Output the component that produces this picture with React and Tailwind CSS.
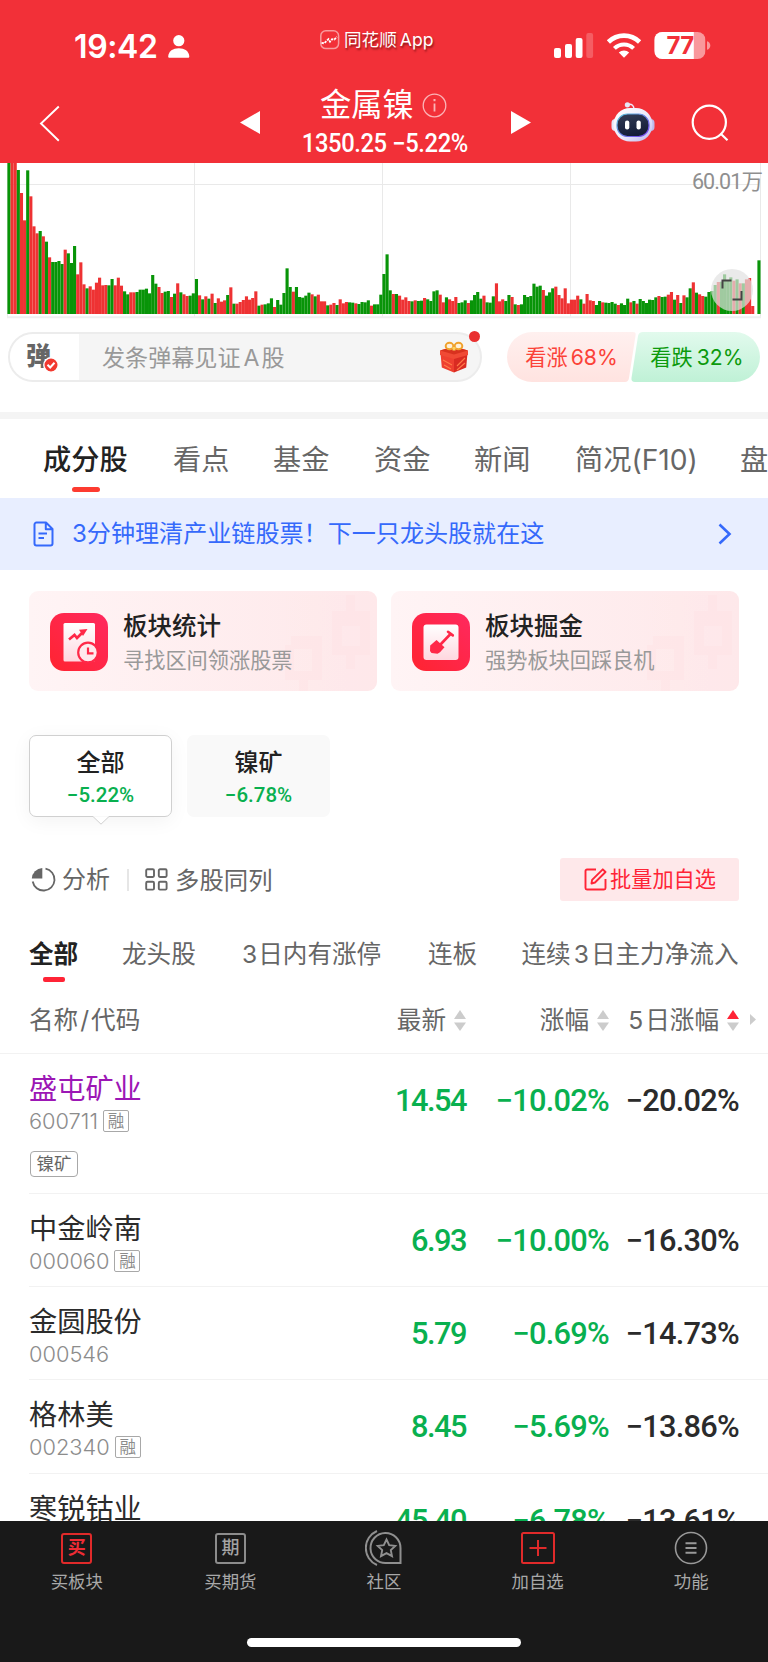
import React from "react";

const SANS = "font-['Inter','Noto_Sans_CJK_SC',sans-serif]";
const NUM = "font-['Roboto','Noto_Sans_CJK_SC',sans-serif]";

/* Minute volume bars: colour letter followed by the top edge on a 462-unit scale. */
const VOLUME =
  "G0 R0 R0 G30 R99 R181 G31 R109 R199 R220 G213 R229 G245 R292 G306 G306 G303 G312 R269 G280 G309 G258 R343 R307 R373 G385 R379 R389 R368 R353 R376 R375 G376 G357 R376 R353 R377 G394 G403 R397 R397 G396 G389 G389 G386 G400 G345 G371 R381 R399 G395 G393 R411 G401 R370 G397 R403 R408 G407 G400 G357 R406 G418 R409 G416 R401 G429 R415 R425 R421 G405 R382 G431 R431 R426 R420 R409 R419 R414 R394 " +
  "G437 R434 G433 G430 G415 R441 G420 G434 G399 G325 G381 R395 G381 G411 G413 G407 G398 R403 G409 R404 R424 R424 G436 R434 R429 G435 R418 R430 R426 G427 G428 R430 G432 G426 G427 G421 R437 G433 G433 G404 G342 G283 G391 R402 G402 R407 R419 R412 R423 G424 R421 G423 G422 R414 G418 G423 G394 G391 R404 R427 G412 R418 R423 R411 G429 G427 G421 R429 G421 G405 G396 G416 R407 G427 G428 G409 R370 R424 R418 G423 G405 R411 " +
  "G433 R435 G433 G405 G411 G408 G371 G380 G377 R390 G407 G397 G385 R380 R405 R415 R385 R430 R419 R419 R407 G418 R431 R402 R421 R423 G435 G423 R427 G428 G429 G426 G431 R435 G430 G435 G416 R427 G423 R431 G417 G423 G429 G419 G420 G412 R408 G411 G410 R404 R396 G419 R405 G429 R406 G412 G385 R367 G398 R403 R408 G410 G396 G393 G375 R366 G365 G343 G360 G352 R362 G358 R370 G370 R358 R354 R438 R462 G301";

const bars = VOLUME.split(" ").map((b, i) => ({
  x: 7.4 + i * 3.125,
  color: b[0] === "G" ? "#089408" : "#ee3233",
  top: Math.max(-1, Number(b.slice(1)) / 3 - 4),
}));

function VolumeChart() {
  return (
    <svg width="768" height="158" viewBox="0 -1 768 158" className="block">
      <g stroke="#e9e9e9" strokeWidth="1">
        <path d="M7 20.5H759M194.5 -1V154M382.5 -1V154M570.5 -1V154M760.5 -1V154M7.5 -1V154" />
        <path d="M7 153.2H761" strokeWidth="2" stroke="#efeff0" />
      </g>
      {bars.map((b, i) => (
        <rect key={i} x={b.x} y={b.top} width="3.125" height={150 - b.top} fill={b.color} />
      ))}
    </svg>
  );
}

function StatusBar() {
  return (
    <div className="flex h-[84px] items-start pl-[74px] text-white">
      <div className="mt-[27px] w-[86px] whitespace-nowrap text-[32px] font-semibold leading-[40px] tracking-[-0.4px]">19:42</div>
      <svg className="ml-[7px] mt-[34px]" width="23" height="25" viewBox="0 0 23 25" fill="#fff">
        <circle cx="11.8" cy="6.7" r="5.6" />
        <path d="M1.2 22.5C1.5 17 6 14.2 11.8 14.2S22 17 22.3 22.5c0 1-.5 1.3-1.2 1.3H2.4c-.7 0-1.2-.3-1.2-1.3z" />
      </svg>
      <div className="ml-[130px] mt-[29px] flex h-[22px] items-center">
        <svg width="20" height="20" viewBox="0 0 20 20" fill="none">
          <rect x="0.8" y="0.8" width="17.8" height="17.8" rx="5" stroke="#f89a9d" strokeWidth="1.5" />
          <path d="M1.5 12.8l2.6.5 2-2 2.4-2.2 1.5 2.5 2-2.3 2.3.3 2.6-2.8" stroke="#fff" strokeWidth="1.8" strokeDasharray="2.4 1" />
        </svg>
        <span className="ml-[4px] whitespace-nowrap text-[17.6px] leading-[22px] [text-shadow:1px_2px_2px_rgba(60,0,0,0.55)]">同花顺<span className="ml-[3px]">App</span></span>
      </div>
      <svg className="absolute left-[550.5px] top-[28px]" width="165" height="36" viewBox="0 0 165 36" fill="#fff">
        <rect x="3" y="20" width="7" height="10" rx="2" />
        <rect x="14" y="16" width="7" height="14" rx="2" />
        <rect x="24.7" y="10" width="6.8" height="20" rx="2" />
        <rect x="35.3" y="5" width="6.8" height="25" rx="2" opacity="0.22" />
        <path d="M73 29.7l5.2-5.2a7.6 7.6 0 0 0-10.4 0z" />
        <path d="M63.4 20.4a13.6 13.6 0 0 1 19.2 0" fill="none" stroke="#fff" strokeWidth="4" />
        <path d="M57.4 14a22.4 22.4 0 0 1 31.2 0" fill="none" stroke="#fff" strokeWidth="4.6" />
        <clipPath id="batt"><rect x="103.3" y="4" width="51.2" height="27" rx="8" /></clipPath>
        <g clipPath="url(#batt)">
          <rect x="103.3" y="4" width="51.2" height="27" fill="#f9989c" />
          <rect x="103.3" y="4" width="39.5" height="27" />
        </g>
        <path d="M156 13.3c2 .5 3.3 2 3.3 4.2s-1.3 3.7-3.3 4.2z" fill="#f9989c" />
        <text x="129" y="26" textAnchor="middle" fontFamily="Inter" fontWeight="700" fontSize="24" letterSpacing="-0.8" fill="#f23038">77</text>
      </svg>
    </div>
  );
}

function Robot() {
  return (
    <svg width="44" height="42" viewBox="0 0 44 42">
      <defs>
        <linearGradient id="rh" x1="0" y1="0" x2="1" y2="1">
          <stop offset="0" stopColor="#fff" />
          <stop offset="0.55" stopColor="#eceafb" />
          <stop offset="1" stopColor="#b9b4ee" />
        </linearGradient>
        <linearGradient id="rf" x1="0" y1="0" x2="0.3" y2="1">
          <stop offset="0" stopColor="#333d56" />
          <stop offset="1" stopColor="#151d38" />
        </linearGradient>
        <linearGradient id="rs" x1="0" y1="0" x2="1" y2="1">
          <stop offset="0" stopColor="#58c3d8" />
          <stop offset="1" stopColor="#7a3ff0" />
        </linearGradient>
      </defs>
      <path d="M17 2.5q6-1 6 5" fill="none" stroke="#eeeafc" strokeWidth="1.5" />
      <circle cx="16.4" cy="2.8" r="2.6" fill="#e6e6f6" />
      <rect x="0.5" y="17" width="8" height="12" rx="4" fill="#e4e4f6" />
      <rect x="35.5" y="17" width="8" height="12" rx="4" fill="#bdb9ea" />
      <rect x="2.5" y="6" width="39" height="33.5" rx="16.5" fill="url(#rh)" />
      <rect x="6" y="12" width="32" height="22.5" rx="10.5" fill="url(#rf)" stroke="url(#rs)" strokeWidth="1.2" />
      <rect x="14" y="18.5" width="4.3" height="9" rx="2.1" fill="#fff" />
      <rect x="25.5" y="18.5" width="4.3" height="9" rx="2.1" fill="#fff" />
    </svg>
  );
}

function TitleBar() {
  return (
    <div className="flex h-[80px] items-start text-white">
      <svg className="ml-[38px] mt-[20px]" width="24" height="40" viewBox="0 0 24 40" fill="none" stroke="#fff" strokeWidth="1.9">
        <path d="M20.8 2.5L3 19.5 20.8 36.8" />
      </svg>
      <svg className="ml-[178px] mt-[27px]" width="20" height="23" fill="#fff"><path d="M0 11.5L20 0v23z" /></svg>
      <div className="w-[251px]">
        <div className="flex h-[42px] items-center pl-[60px]">
          <span className="text-[31.3px] leading-[42px]">金属镍</span>
          <svg className="ml-[8px]" width="25" height="25" viewBox="0 0 25 25" fill="none" stroke="#fbb4b7" strokeWidth="1.3">
            <circle cx="12.5" cy="12.5" r="11.3" />
            <path d="M12.5 10.5v8" strokeWidth="1.8" />
            <path d="M12.5 6v2.200" strokeWidth="2" />
          </svg>
        </div>
        <div className={`${NUM} mt-[2px] origin-left scale-x-[0.95] whitespace-nowrap pl-[44px] text-[25px] font-medium leading-[32px] tracking-[-0.4px]`}>1350.25 −5.22%</div>
      </div>
      <svg className="mt-[27px]" width="20" height="23" fill="#fff"><path d="M20 11.5L0 0v23z" /></svg>
      <div className="ml-[80px] mt-[18px]"><Robot /></div>
      <svg className="ml-[36px] mt-[20px]" width="38" height="38" viewBox="0 0 38 38" fill="none" stroke="#fff" strokeWidth="2.2">
        <circle cx="18.3" cy="18.3" r="16.6" />
        <path d="M29.5 29.5l7 6.8" />
      </svg>
    </div>
  );
}

function Gift() {
  return (
    <svg width="30" height="32" viewBox="0 0 30 32">
      <path d="M1.5 12l13.5 4v15.5L2.8 26.5z" fill="#ee4030" />
      <path d="M28.5 12L15 16v15.5l12.2-5z" fill="#d92b22" />
      <path d="M1 9.500L15 5.5l14 4v4.500l-14 4-14-4z" fill="#f04a35" />
      <path d="M1 9.500L15 5.5l14 4-14 4z" fill="#d8321f" />
      <path d="M4 19l9 5M5 24l7 4M18 25l8-8M18 29l8-7" stroke="#ff7a48" strokeWidth="1.1" />
      <ellipse cx="10.5" cy="5" rx="3.800" ry="3.200" fill="#fff0d8" stroke="#f0a22c" strokeWidth="2" />
      <ellipse cx="19.5" cy="5" rx="3.800" ry="3.200" fill="#fff0d8" stroke="#f0a22c" strokeWidth="2" />
      <path d="M13.5 6h3v3.500h-3z" fill="#fbd05c" />
    </svg>
  );
}

function DanmakuRow() {
  return (
    <div className="mt-[10px] flex h-[50px] px-[8px]">
      <div className="relative flex h-[50px] w-[475px] items-center overflow-visible rounded-full border-2 border-[#ececec] bg-[#f5f5f5]">
        <div className="relative flex h-full w-[69px] items-center rounded-l-full bg-white pl-[16px]">
          <span className="pb-[3px] text-[25px] font-black leading-[30px] text-[#666]">弹</span>
          <svg className="absolute left-[33px] top-[23px]" width="16" height="16" viewBox="0 0 16 16" fill="none">
            <circle cx="8" cy="8" r="7.2" fill="#f2392f" stroke="#fff" strokeWidth="1.4" />
            <path d="M4.5 7.800L7.200 10.500l4.300-4.700" stroke="#fff" strokeWidth="2" />
          </svg>
        </div>
        <span className="ml-[23px] flex-1 whitespace-nowrap pt-[1px] text-[23.1px] leading-[34px] text-[#999]">发条弹幕见证<span className="ml-[3px] mr-[2px]">A</span>股</span>
        <div className="mr-[11px]"><Gift /></div>
        <span className="absolute -top-[3px] right-0 h-[11px] w-[11px] rounded-full bg-[#e93030]" />
      </div>
      <div className="relative ml-[25px] h-[50px] w-[253px]">
        <svg className="absolute inset-0" width="253" height="50" viewBox="0 0 253 50">
          <defs>
            <linearGradient id="up" x1="0" y1="0" x2="0" y2="1"><stop offset="0" stopColor="#fff0ef" /><stop offset="1" stopColor="#ffe3e0" /></linearGradient>
            <linearGradient id="dn" x1="0" y1="0" x2="0" y2="1"><stop offset="0" stopColor="#e2faed" /><stop offset="1" stopColor="#bff1d6" /></linearGradient>
          </defs>
          <path d="M25 0H126q3 0 2.600 3L122 46q-.6 4-4 4H25a25 25 0 0 1 0-50z" fill="url(#up)" />
          <path d="M136 0h92a25 25 0 0 1 0 50H128q-4 0-3.500-4L131 4q.8-4 5-4z" fill="url(#dn)" />
        </svg>
        <div className="relative flex h-[50px] items-center whitespace-nowrap pt-[1px] text-[21.200px]">
          <span className="ml-[18px] w-[92px] text-[#fb4238]">看涨<span className="ml-[3px]">68%</span></span>
          <span className="ml-[33px] w-[92px] text-[#0c9a0c]">看跌<span className="ml-[4px]">32%</span></span>
        </div>
      </div>
    </div>
  );
}

function Tabs() {
  const tabs = [["看点", "w-[100px]"], ["基金", "w-[101px]"], ["资金", "w-[100px]"], ["新闻", "w-[101px]"], ["简况(F10)", "w-[165px]"], ["盘", "w-[28px]"]];
  return (
    <div className="h-[79px] pl-[43px]">
      <div className="flex whitespace-nowrap pt-[21px] text-[28.2px] leading-[40px] text-[#666]">
        <div className="w-[130px] shrink-0 font-medium text-[#222]">
          成分股
          <div className="ml-[29px] mt-[7px] h-[5px] w-[28px] rounded-full bg-[#fd3b30]" />
        </div>
        {tabs.map(([t, w]) => <div key={t} className={`${w} shrink-0`}>{t}</div>)}
      </div>
    </div>
  );
}

function Banner() {
  return (
    <div className="flex h-[72px] shrink-0 items-center bg-[#e8eeff] text-[#3569fb]">
      <svg className="ml-[33px]" width="21" height="26" viewBox="0 0 21 26" fill="none" stroke="#3569fb" strokeWidth="2" strokeLinejoin="round">
        <path d="M13 1.5H3.5a2 2 0 0 0-2 2v19a2 2 0 0 0 2 2h14a2 2 0 0 0 2-2V8zM12.800 1.500V8.300h6.700M5.500 12.500h8.500M5.500 17h5.500" />
      </svg>
      <span className="ml-[18px] whitespace-nowrap pt-[1px] text-[24.08px]">3分钟理清产业链股票！下一只龙头股就在这</span>
      <svg className="ml-auto mr-[36px]" width="14" height="22" viewBox="0 0 14 22" fill="none" stroke="#3569fb" strokeWidth="2.600"><path d="M1.500 1.500L11.500 11 1.500 20.500" /></svg>
    </div>
  );
}

function CardIcon({ kind }) {
  return (
    <svg width="58" height="58" viewBox="0 0 58 58">
      <defs>
        <linearGradient id="ci" x1="1" y1="0" x2="0" y2="1"><stop offset="0" stopColor="#ff295f" /><stop offset="1" stopColor="#ff2430" /></linearGradient>
        <linearGradient id="cp" x1="0" y1="0" x2="0" y2="1"><stop offset="0" stopColor="#fff" /><stop offset="1" stopColor="#ffd7df" /></linearGradient>
      </defs>
      <rect width="58" height="58" rx="14" fill="url(#ci)" />
      {kind === "stats" ? (
        <g>
          <rect x="13.5" y="10" width="31.5" height="38.5" rx="1.5" fill="url(#cp)" />
          <path d="M19 26.500l5.500-4.500 2.500 3 6-6" fill="none" stroke="#ff2848" strokeWidth="2.700" />
          <path d="M29 16.800l8.500-.8-4.500 7z" fill="#ff2848" />
          <circle cx="38" cy="39.500" r="9.800" fill="#ffe9ed" stroke="#ff2848" strokeWidth="2.200" />
          <path d="M38 34.500v5.800h5.500" fill="none" stroke="#ff2848" strokeWidth="2.200" />
        </g>
      ) : (
        <g>
          <rect x="11.5" y="11.500" width="35" height="35.500" rx="3" fill="url(#cp)" />
          <path d="M28 32L38.500 21M36 18.800l4.800 3.600" fill="none" stroke="#ff2848" strokeWidth="2.600" strokeLinecap="round" />
          <path d="M24.500 27l8 7.300-4.500 5-2.500 1.500-6-.8-1.500-2 .2-5.500z" fill="#ff2848" />
        </g>
      )}
    </svg>
  );
}

function PromoCard({ kind, title, sub }) {
  return (
    <div className="relative flex h-[100px] w-[348px] overflow-hidden rounded-[9px] bg-linear-to-r from-[#fff4f5] to-[#fee8ea] pl-[21px] pt-[21.500px]">
      <svg className="absolute bottom-0 right-0" width="100" height="100" viewBox="0 0 100 100" fill="#ffdfe3" opacity="0.350">
        <path fillRule="evenodd" d="M69 4h9v16h15v44H78v14h-9V64H55V20h14zM65 35v20h18V35z" />
        <path fillRule="evenodd" d="M14 45h31v44H31v11h-9V89H8V54h6zM17 58v22h18V58z" />
      </svg>
      <CardIcon kind={kind} />
      <div className="relative ml-[15px] whitespace-nowrap">
        <div className="-mt-[4px] text-[24.500px] font-medium leading-[34px] text-[#222]">{title}</div>
        <div className="text-[21.200px] leading-[34px] text-[#999]">{sub}</div>
      </div>
    </div>
  );
}

function Chips() {
  return (
    <div className="mt-[44px] flex gap-[15px] pl-[29px] text-center">
      <div className="relative h-[82px] w-[143px] rounded-[7px] border border-[#d0d0d0] bg-white pt-[10px] shadow-[0_4px_20px_rgba(0,0,0,0.050)]">
        <div className="text-[24px] font-medium leading-[34px] text-[#222]">全部</div>
        <div className={`${NUM} text-[20.500px] font-medium leading-[31px] text-[#09b04f]`}>−5.22%</div>
        <svg className="absolute left-[62px] top-[80px]" width="18" height="9" viewBox="0 0 18 9" fill="#fff" stroke="#d0d0d0"><path d="M1 .5L9 8.200 17 .5" /><path d="M1.500 0H16.500" stroke="#fff" strokeWidth="1.500" /></svg>
      </div>
      <div className="h-[82px] w-[143px] rounded-[7px] bg-[#f9f9f9] pt-[11px]">
        <div className="text-[24px] font-medium leading-[34px] text-[#222]">镍矿</div>
        <div className={`${NUM} text-[20.500px] font-medium leading-[31px] text-[#09b04f]`}>−6.78%</div>
      </div>
    </div>
  );
}

function Toolbar() {
  return (
    <div className="mt-[41px] flex h-[43px] items-center whitespace-nowrap pl-[31px] pr-[29px] text-[24px] text-[#666]">
      <svg width="25" height="25" viewBox="0 0 25 25" fill="none" stroke="#666" strokeWidth="1.800">
        <path d="M14.500 1.700A11 11 0 1 1 1.700 14.500" />
        <path d="M11.300 1v10.500H.8A11 11 0 0 1 11.300 1z" fill="#666" stroke="none" />
      </svg>
      <span className="ml-[6px] pt-[1px]">分析</span>
      <span className="ml-[17px] h-[22px] w-[1.500px] bg-[#e6e6e6]" />
      <svg className="ml-[16.500px]" width="23" height="23" viewBox="0 0 23 23" fill="none" stroke="#666" strokeWidth="1.900">
        <rect x="1.200" y="1.200" width="7.800" height="7.800" rx="1.200" /><rect x="13.800" y="1.200" width="7.800" height="7.800" rx="1.200" />
        <rect x="1.200" y="13.800" width="7.800" height="7.800" rx="1.200" /><rect x="13.800" y="13.800" width="7.800" height="7.800" rx="1.200" />
      </svg>
      <span className="ml-[7px] pt-[1px] text-[24.400px]">多股同列</span>
      <div className="ml-auto flex h-[43px] w-[179px] items-center rounded-[3px] bg-[#fee8ea] pl-[24px] text-[21.200px] text-[#ff2436]">
        <svg width="23" height="23" viewBox="0 0 23 23" fill="none" stroke="#ff2436" strokeWidth="1.900" strokeLinejoin="round">
          <path d="M12 1.500H3a1.500 1.500 0 0 0-1.500 1.500V20A1.500 1.500 0 0 0 3 21.500H20A1.500 1.500 0 0 0 21.500 20V11" />
          <path d="M18.800 1.300l2.700 2.700L11 14.500l-3.500 1 .6-3.600z" />
        </svg>
        <span className="ml-[3px] pt-[1px]">批量加自选</span>
      </div>
    </div>
  );
}

function SubTabs() {
  return (
    <div className="mt-[35px] flex h-[48px] whitespace-nowrap pl-[29px] text-[24.600px] leading-[36px] text-[#666]">
      <div className="w-[93px] font-bold text-[#222]">
        全部
        <div className="ml-[14px] mt-[5px] h-[5px] w-[22px] rounded-[2px] bg-[#ff2436]" />
      </div>
      <div className="w-[120px]">龙头股</div>
      <div className="w-[186px]"><span className="mr-[1px]">3</span>日内有涨停</div>
      <div className="w-[93.500px]">连板</div>
      <div>连续<span className="ml-[3px] mr-[2px]">3</span>日主力净流入</div>
    </div>
  );
}

function Sort({ active }) {
  return (
    <svg className="ml-[8px]" width="12" height="21" viewBox="0 0 12 21">
      <path d="M6 0l6 9H0z" fill={active ? "#ff2436" : "#ccc"} />
      <path d="M6 21l6-8.500H0z" fill="#ccc" />
    </svg>
  );
}

const COLS = "grid grid-cols-[300px_137px_143px_130px]";

function TableHead() {
  return (
    <div className="relative h-[70px] border-b border-[#f2f2f2] pl-[29px] pt-[18px]">
      <div className={`${COLS} whitespace-nowrap text-[24.600px] leading-[36px] text-[#666]`}>
        <div>名称<span className="px-[2px]">/</span>代码</div>
        <div className="flex items-center justify-end">最新<Sort /></div>
        <div className="flex items-center justify-end">涨幅<Sort /></div>
        <div className="flex items-center justify-end"><span className="mr-[2px]">5</span>日涨幅<Sort active /></div>
      </div>
      <svg className="absolute left-[750px] top-[30px]" width="6" height="11"><path d="M0 0l6 5.500L0 11z" fill="#ccc" /></svg>
    </div>
  );
}

const STOCKS = [
  { name: "盛屯矿业", code: "600711", margin: true, tag: "镍矿", held: true, last: "14.54", chg: "−10.02%", five: "−20.02%" },
  { name: "中金岭南", code: "000060", margin: true, last: "6.93", chg: "−10.00%", five: "−16.30%" },
  { name: "金圆股份", code: "000546", last: "5.79", chg: "−0.69%", five: "−14.73%" },
  { name: "格林美", code: "002340", margin: true, last: "8.45", chg: "−5.69%", five: "−13.86%" },
  { name: "寒锐钴业", last: "45.40", chg: "−6.78%", five: "−13.61%" },
];

function StockRow({ s }) {
  return (
    <div className={`ml-[29px] shrink-0 border-b border-[#f2f2f2] ${s.tag ? "h-[140px]" : "h-[93.200px]"}`}>
      <div className={COLS}>
        <div>
          <div className={`pt-[15px] text-[28.200px] leading-[40px] ${s.held ? "text-[#9c17b5]" : "text-[#2b2b2b]"}`}>{s.name}</div>
          {s.code && (
            <div className="-mt-[2px] flex items-center text-[21.800px] font-light leading-[28px] text-[#8c8c8c]">
              {s.code}
              {s.margin && <span className="ml-[5px] flex h-[22px] w-[26px] items-center justify-center rounded-[2px] border border-[#a8a8a8] text-[16.500px] font-normal leading-none">融</span>}
            </div>
          )}
          {s.tag && <div className="ml-[1px] mt-[16px] flex h-[26px] w-[48px] items-center justify-center rounded-[4px] border border-[#a8a8a8] text-[17.500px] leading-none text-[#666]">{s.tag}</div>}
        </div>
        <div className={`${NUM} pt-[29px] text-right text-[30.800px] font-medium leading-[36px] tracking-[-1.500px] text-[#09b04f]`}>{s.last}</div>
        <div className={`${NUM} pt-[29px] text-right text-[30.800px] font-medium leading-[36px] tracking-[-0.750px] text-[#09b04f]`}>{s.chg}</div>
        <div className={`${NUM} pt-[29px] text-right text-[30.800px] font-medium leading-[36px] tracking-[-0.750px] text-[#2b2b2b]`}>{s.five}</div>
      </div>
    </div>
  );
}

function NavItem({ label, children }) {
  return (
    <div className="flex flex-1 flex-col items-center pt-[9px]">
      <div className="flex h-[36px] items-center justify-center">{children}</div>
      <span className="mt-[2px] text-[17.400px] leading-[28px] text-[#a8a8a8]">{label}</span>
    </div>
  );
}

function BottomNav() {
  return (
    <div className="flex h-[141px] shrink-0 flex-col items-center bg-[#191919]">
      <div className="flex w-full">
        <NavItem label="买板块">
          <span className="flex h-[31px] w-[31px] items-center justify-center rounded-[3px] border-2 border-[#e02a2a] text-[18px] font-bold leading-none text-[#f02c35]">买</span>
        </NavItem>
        <NavItem label="买期货">
          <span className="flex h-[31px] w-[31px] items-center justify-center rounded-[3px] border-2 border-[#8c8c8c] text-[18px] font-medium leading-none text-[#a3a3a3]">期</span>
        </NavItem>
        <NavItem label="社区">
          <svg width="37" height="36" viewBox="0 0 37 36" fill="none" stroke="#8f8f8f" strokeWidth="2">
            <path d="M12 1A18.500 18.500 0 0 0 12 35" />
            <path d="M35.500 33H21.500A15 15 0 1 1 35.500 18z" />
            <path d="M21.500 9.500l2.700 5.600 6.100.8-4.500 4.200 1.200 6.100-5.500-3-5.500 3 1.200-6.100-4.500-4.200 6.100-.8z" strokeWidth="1.900" />
          </svg>
        </NavItem>
        <NavItem label="加自选">
          <svg width="34" height="32" viewBox="0 0 34 32" fill="none" stroke="#e02a2a" strokeWidth="2">
            <rect x="1" y="1" width="32" height="30" rx="1.500" /><path d="M17 8v16M8.500 16h17" />
          </svg>
        </NavItem>
        <NavItem label="功能">
          <svg width="34" height="34" viewBox="0 0 34 34" fill="none" stroke="#999" strokeWidth="1.600">
            <circle cx="17" cy="17" r="15.500" /><path d="M11.500 12.200h11M11.500 17h11M11.500 21.800h11" strokeWidth="2" />
          </svg>
        </NavItem>
      </div>
      <div className="mt-[42px] h-[9px] w-[274px] rounded-full bg-white" />
    </div>
  );
}

export default function App() {
  return (
    <div className={`${SANS} flex h-[1662px] w-[768px] flex-col overflow-hidden bg-white`}>
      <div className="relative h-[163px] shrink-0 bg-[#f23038]">
        <StatusBar />
        <TitleBar />
      </div>
      <div className="relative h-[158px] shrink-0">
        <VolumeChart />
        <span className={`${NUM} absolute right-[6px] top-[5px] text-[21.500px] leading-[28px] tracking-[-0.900px] text-[#8f8f8f]`}>60.01万</span>
        <div className="absolute left-[711px] top-[106px] flex h-[42px] w-[42px] items-center justify-center rounded-full bg-[#e1e1e1]/70">
          <svg width="22" height="22" viewBox="0 0 22 22" fill="none" stroke="#444" strokeWidth="2"><path d="M1.500 9.500V1.500H10.500M20.500 12V20.500H11.500" /></svg>
        </div>
      </div>
      <div className="h-[91px] shrink-0 pt-[1px]"><DanmakuRow /></div>
      <div className="box-content h-[79px] shrink-0 border-t-[7px] border-[#f4f4f4]"><Tabs /></div>
      <Banner />
      <div className="mt-[21px] flex shrink-0 gap-[14px] px-[29px]">
        <PromoCard kind="stats" title="板块统计" sub="寻找区间领涨股票" />
        <PromoCard kind="dig" title="板块掘金" sub="强势板块回踩良机" />
      </div>
      <Chips />
      <Toolbar />
      <SubTabs />
      <TableHead />
      <div className="flex min-h-0 flex-1 flex-col overflow-hidden">
        {STOCKS.map((s) => <StockRow key={s.name} s={s} />)}
      </div>
      <BottomNav />
    </div>
  );
}
